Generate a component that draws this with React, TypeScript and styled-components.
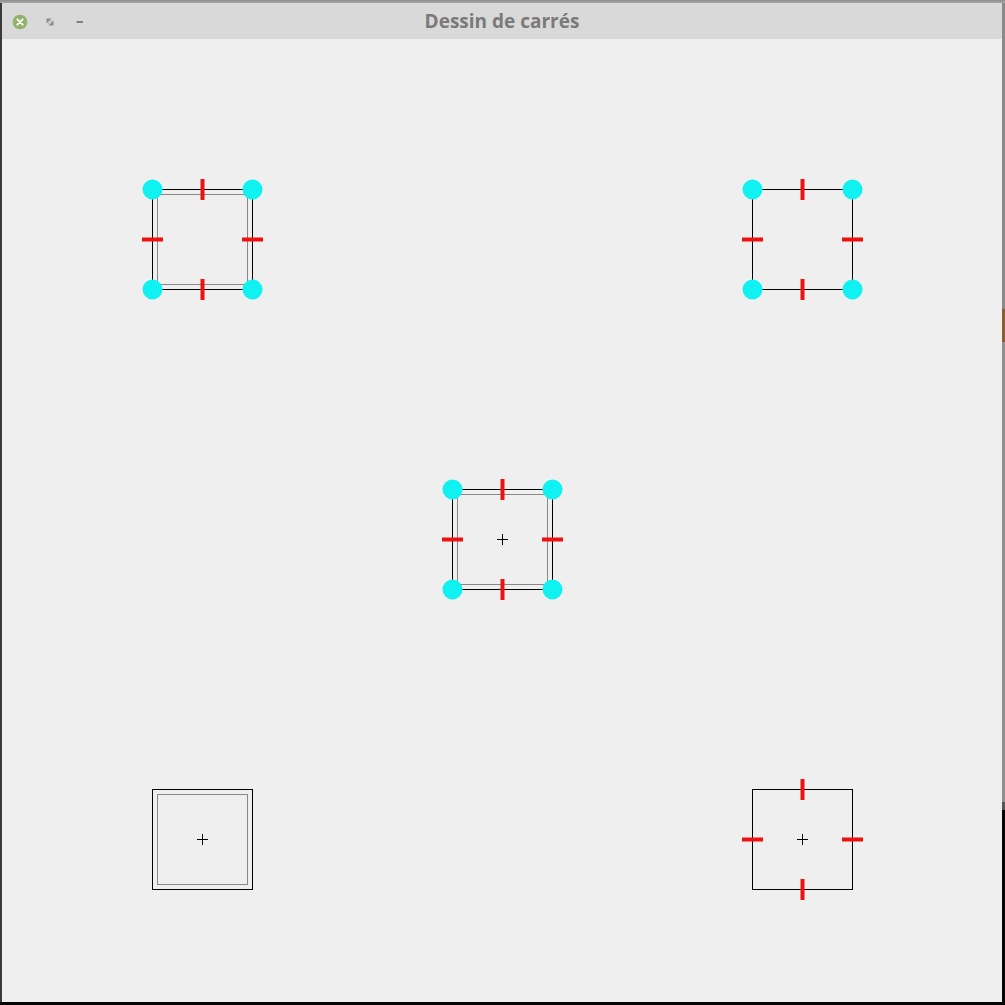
import React from "react";
import styled, { createGlobalStyle } from "styled-components";

const Global = createGlobalStyle`
  html, body { margin: 0; padding: 0; background: #1a1a1a; overflow: hidden; }
  #root { width: 1005px; height: 1005px; }
`;

const Desktop = styled.div`
  width: 1005px;
  height: 1005px;
  display: flex;
  flex-direction: column;
  background: #111;
`;

const TopEdge = styled.div`
  height: 3px;
  background: linear-gradient(#8c8c8c, #a8a8a8);
  flex-shrink: 0;
`;

const Middle = styled.div`
  display: flex;
  height: 999px;
  flex-shrink: 0;
`;

const LeftEdge = styled.div`
  width: 2px;
  background: #3a3a3a;
`;

const RightEdge = styled.div`
  width: 3px;
  display: flex;
  flex-direction: column;
`;

const EdgePiece = styled.div<{ $h: number; $c: string }>`
  height: ${(p) => p.$h}px;
  background: ${(p) => p.$c};
  flex-shrink: 0;
`;

const BottomEdge = styled.div`
  height: 3px;
  background: #050505;
`;

const Window = styled.div`
  width: 1000px;
  display: flex;
  flex-direction: column;
  background: #efefef;
`;

const TitleBar = styled.div`
  height: 36px;
  background: #d9d9d9;
  display: flex;
  align-items: center;
  position: relative;
  flex-shrink: 0;
`;

const Controls = styled.div`
  display: flex;
  align-items: center;
  gap: 14px;
  padding-left: 9.5px;
  padding-top: 1px;
`;

const Title = styled.div`
  position: absolute;
  left: 0;
  right: 0;
  top: 0;
  bottom: 0;
  display: flex;
  align-items: center;
  justify-content: center;
  font-family: "Open Sans", "DejaVu Sans", sans-serif;
  font-weight: 700;
  font-size: 19px;
  color: #7a7a7a;
  pointer-events: none;
  padding-top: 0px;
`;

const Canvas = styled.svg`
  display: block;
  width: 1000px;
  height: 963px;
`;

const CYAN = "#10f2f2";
const RED = "#ee1111";

type Sq = {
  x: number;
  y: number;
  inner?: boolean;
  corners?: boolean;
  marks?: boolean;
  cross?: boolean;
};

const squares: Sq[] = [
  { x: 150, y: 150, inner: true, corners: true, marks: true },
  { x: 750, y: 150, corners: true, marks: true },
  { x: 450, y: 450, inner: true, corners: true, marks: true, cross: true },
  { x: 150, y: 750, inner: true, cross: true },
  { x: 750, y: 750, marks: true, cross: true },
];

function Square({ s }: { s: Sq }) {
  const { x, y } = s;
  const cx = x + 50;
  const cy = y + 50;
  return (
    <g>
      <rect x={x + 0.5} y={y + 0.5} width={100} height={100} fill="none" stroke="#000" strokeWidth={1} />
      {s.inner && (
        <rect x={x + 5.5} y={y + 5.5} width={90} height={90} fill="none" stroke="#888" strokeWidth={1} />
      )}
      {s.corners &&
        [
          [x + 0.5, y + 0.5],
          [x + 100.5, y + 0.5],
          [x + 0.5, y + 100.5],
          [x + 100.5, y + 100.5],
        ].map(([px, py], i) => <circle key={i} cx={px} cy={py} r={10} fill={CYAN} />)}
      {s.marks && (
        <g stroke={RED} strokeWidth={4}>
          <line x1={cx + 0.5} y1={y - 10} x2={cx + 0.5} y2={y + 11} />
          <line x1={cx + 0.5} y1={y + 90} x2={cx + 0.5} y2={y + 111} />
          <line x1={x - 10} y1={cy + 0.5} x2={x + 11} y2={cy + 0.5} />
          <line x1={x + 90} y1={cy + 0.5} x2={x + 111} y2={cy + 0.5} />
        </g>
      )}
      {s.cross && (
        <g stroke="#000" strokeWidth={1}>
          <line x1={cx - 5} y1={cy + 0.5} x2={cx + 6} y2={cy + 0.5} />
          <line x1={cx + 0.5} y1={cy - 5} x2={cx + 0.5} y2={cy + 6} />
        </g>
      )}
    </g>
  );
}

function CloseIcon() {
  return (
    <svg width="16" height="16" viewBox="0 0 16 16">
      <circle cx="8" cy="8" r="7.3" fill="#8fb36b" />
      <path d="M5.3 5.3 L10.7 10.7 M10.7 5.3 L5.3 10.7" stroke="#fff" strokeWidth="1.8" strokeLinecap="round" />
    </svg>
  );
}

function RestoreIcon() {
  return (
    <svg width="16" height="16" viewBox="0 0 16 16">
      <path d="M4.5 4.5 L9.5 4.5 L4.5 9.5 Z" fill="#8a8a8a" />
      <path d="M11.5 11.5 L6.5 11.5 L11.5 6.5 Z" fill="#8a8a8a" />
      <path d="M6 10 L10 6" stroke="#b0b0b0" strokeWidth="1" />
    </svg>
  );
}

function MinimizeIcon() {
  return (
    <svg width="16" height="16" viewBox="0 0 16 16">
      <rect x="4.5" y="7" width="6.5" height="2" fill="#808080" />
    </svg>
  );
}

export default function App() {
  return (
    <>
      <Global />
      <Desktop>
        <TopEdge />
        <Middle>
          <LeftEdge />
          <Window>
            <TitleBar>
              <Controls>
                <CloseIcon />
                <RestoreIcon />
                <MinimizeIcon />
              </Controls>
              <Title>Dessin de carrés</Title>
            </TitleBar>
            <Canvas viewBox="0 0 1000 963">
              {squares.map((s, i) => (
                <Square key={i} s={s} />
              ))}
            </Canvas>
          </Window>
          <RightEdge>
            <EdgePiece $h={306} $c="#8a8a8a" />
            <EdgePiece $h={33} $c="#8b5e2e" />
            <EdgePiece $h={460} $c="#8e8e8e" />
            <EdgePiece $h={8} $c="#555" />
            <EdgePiece $h={192} $c="#050505" />
          </RightEdge>
        </Middle>
        <BottomEdge />
      </Desktop>
    </>
  );
}
